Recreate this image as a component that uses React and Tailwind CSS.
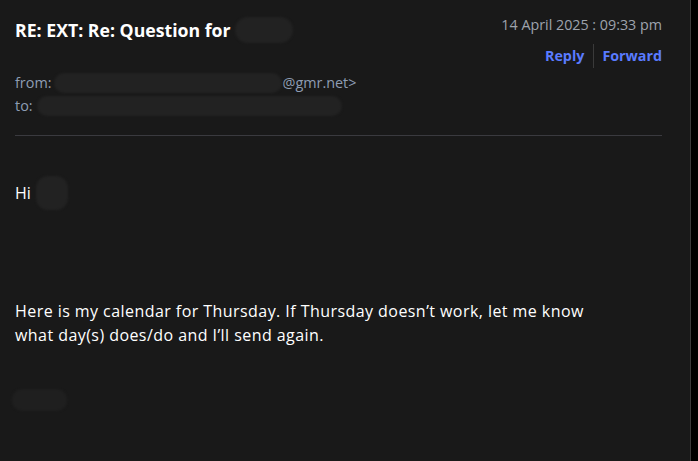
export default function App() {
  const font = { fontFamily: '"Open Sans", "Noto Sans", sans-serif' };
  return (
    <div className="flex h-[461px] w-[698px] bg-black" style={font}>
      <div className="flex w-[691px] flex-col border-r border-[#3a3a3a] bg-[#191919] pl-[15px] pr-[28px]">
        <div className="flex items-start justify-between pt-[14px]">
          <div className="flex items-center pt-[3px]">
            <span className="text-[17.7px] font-bold leading-[24px] text-white">RE: EXT: Re: Question for</span>
            <span className="ml-[4px] inline-block h-[26px] w-[58px] rounded-full bg-[#222222] blur-[1px]" />
          </div>
          <div className="flex flex-col items-end">
            <span className="text-[14.3px] leading-[22px] text-[#9ea3ad]">14 April 2025 : 09:33 pm</span>
            <div className="mt-[8px] flex items-center text-[14.3px] font-bold leading-[20px] text-[#5a7bff]">
              <span className="pr-[9px]">Reply</span>
              <span className="h-[24px] w-px bg-[#3a3a3a]" />
              <span className="pl-[8px]">Forward</span>
            </div>
          </div>
        </div>
        <div className="mt-[3px] flex flex-col text-[14.4px] leading-[23px] text-[#8e9db3]">
          <div className="flex items-center">
            <span>from: </span>
            <span className="ml-[3px] inline-block h-[20px] w-[228px] rounded-full bg-[#222222] blur-[1px]" />
            <span>@gmr.net&gt;</span>
          </div>
          <div className="flex items-center">
            <span>to: </span>
            <span className="ml-[4px] inline-block h-[20px] w-[305px] rounded-full bg-[#222222] blur-[1px]" />
          </div>
        </div>
        <div className="mt-[18px] h-px bg-[#3a3a3f]" />
        <div className="mt-[40px] flex items-center text-[16px] leading-[24px] text-white">
          <span>Hi</span>
          <span className="ml-[5px] inline-block h-[34px] w-[32px] rounded-[12px] bg-[#222222] blur-[1px]" />
        </div>
        <p className="mt-[89px] text-[16px] leading-[24px] tracking-[0.44px] text-white">
          Here is my calendar for Thursday. If Thursday doesn’t work, let me know
          <br />
          what day(s) does/do and I’ll send again.
        </p>
        <div className="ml-[-3px] mt-[42px] h-[22px] w-[55px] rounded-[10px] bg-[#1f1f1f] blur-[1px]" />
      </div>
    </div>
  );
}
